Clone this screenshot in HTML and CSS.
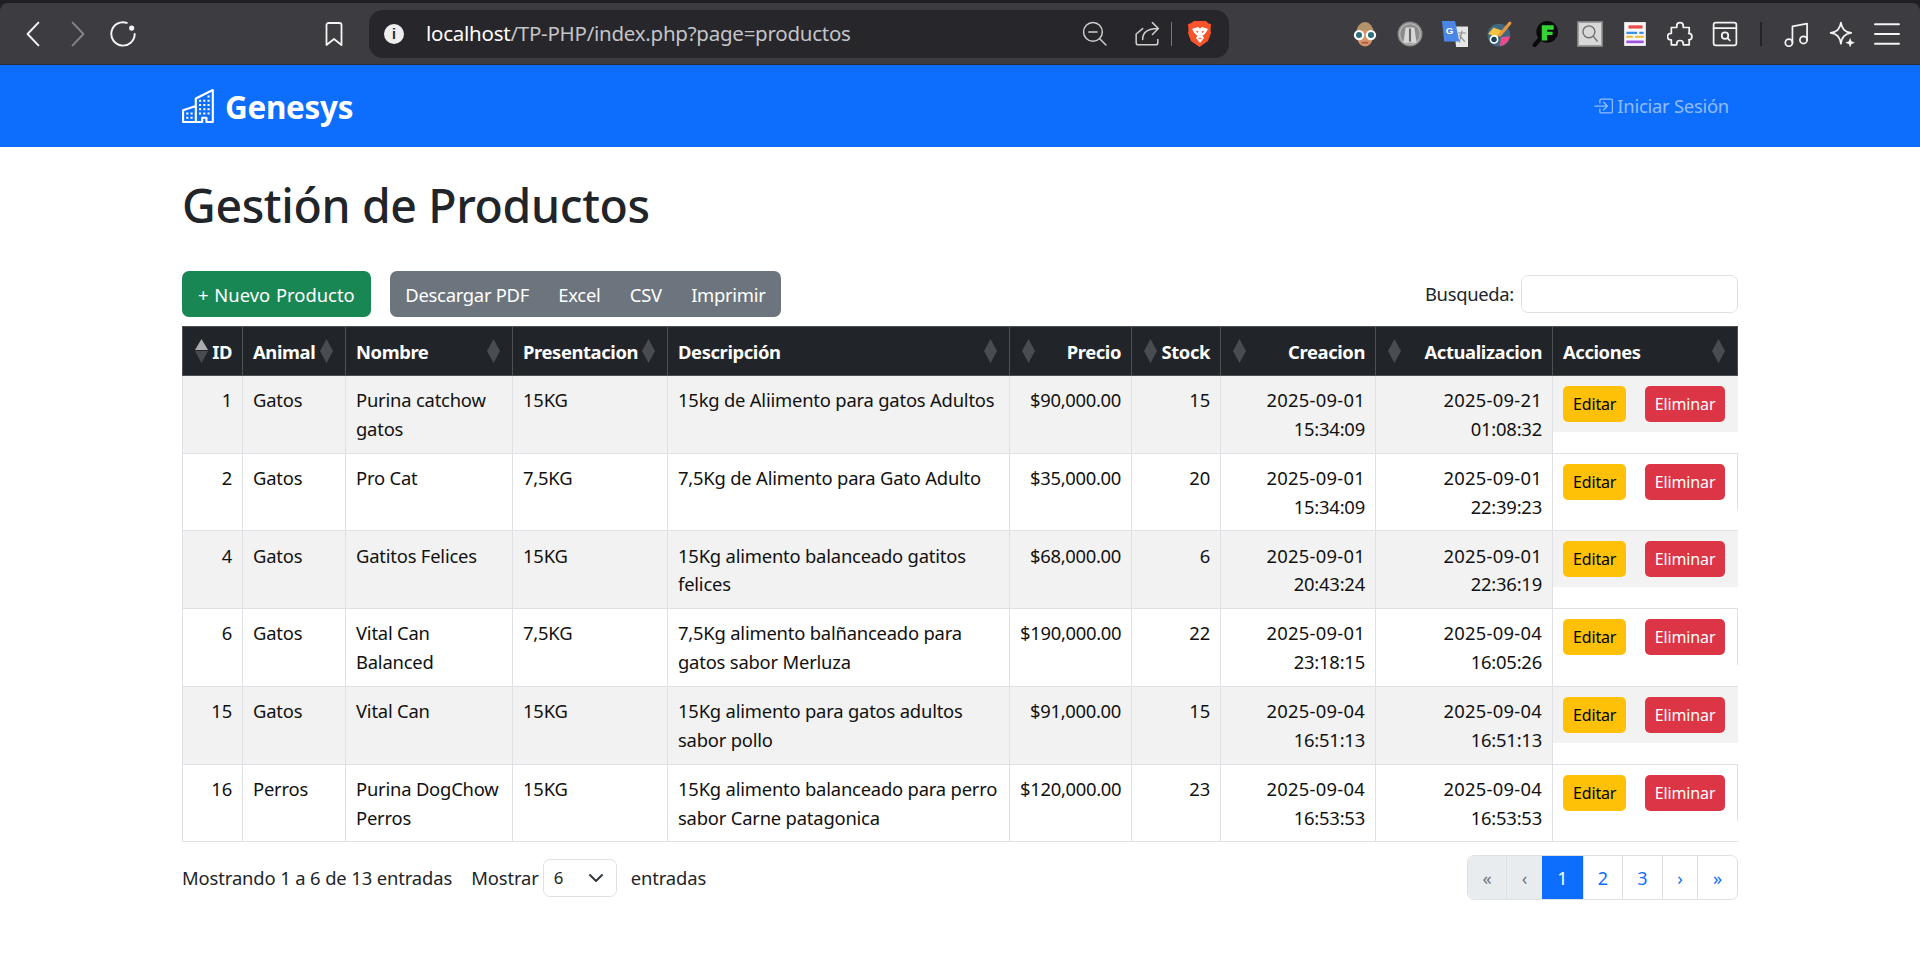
FILE: index.html
```html
<!DOCTYPE html>
<html lang="es">
<head>
<meta charset="utf-8">
<title>Genesys</title>
<link rel="stylesheet" href="styles.css">
</head>
<body>
<div class="chrome">
  <div class="toolbar">
    <div class="nav-icons">
      <svg class="ic" viewBox="0 0 24 24"><path d="M17 1.5 7 12l10 10.5"/></svg>
      <svg class="ic dim" viewBox="0 0 24 24"><path d="M7 1.5 17 12 7 22.5"/></svg>
      <svg class="ic" viewBox="0 0 24 24"><path d="M15.5 1.7A10.8 10.8 0 1 0 22.8 12"/><circle class="fill" cx="20" cy="6.5" r="2.4"/></svg>
    </div>
    <svg class="ic bookmark" viewBox="0 0 18 24"><path d="M1.5 3a2 2 0 0 1 2-2h11a2 2 0 0 1 2 2v20L9 17l-7.500 6z"/></svg>
    <div class="urlbar">
      <span class="info">i</span>
      <span class="url">localhost<span class="url-dim">/TP-PHP/index.php?page=productos</span></span>
      <svg class="ic url-ic zoom-ic" viewBox="0 0 24 24"><circle cx="10.500" cy="10.500" r="9"/><path d="M6.500 10.500h8M17 17l6 6"/></svg>
      <svg class="ic url-ic share-ic" viewBox="0 0 24 24"><path d="m2 12 6-5M2 12v8a2 2 0 0 0 2 2h16a2 2 0 0 0 2-2v-3M8 17c0-6 4-10 14-10M17 1.500l5.500 5.500-5.500 5.500"/></svg>
      <span class="url-sep"></span>
      <svg class="brave" viewBox="0 0 24 28"><path fill="#fb542b" d="M6 1h12l2.500 2.500 2.500.5-.5 6 .5 3-3 8-8.500 6-8.500-6-3-8 .5-3-.5-6 2.500-.5z"/><path fill="#fff" d="m4 9 6-2 2 1.500L14 7l6 2-3 5-2.500 1.500L16 18l-4 5-4-5 1.500-2.500L7 14z"/><path fill="#fb542b" d="M10 18h4l-2 1.500zM7.500 10.500l3 1-1 1.500zM16.500 10.500l-3 1 1 1.500z"/></svg>
    </div>
    <div class="exts">
      <svg class="ext" viewBox="0 0 24 24"><path fill="#b4936b" d="M4 11a8 10 0 0 1 16 0v3H4z"/><ellipse fill="#d9936a" cx="12" cy="16" rx="7" ry="7.500"/><path stroke="#a8583c" stroke-width="1.500" d="M9 20h6"/><circle fill="#2f6f7a" stroke="#fff" stroke-width="2" cx="6.500" cy="13" r="3.800"/><circle fill="#2f6f7a" stroke="#fff" stroke-width="2" cx="17.500" cy="13" r="3.800"/></svg>
      <svg class="ext" viewBox="0 0 24 24"><circle fill="#8c8c8c" cx="12" cy="12" r="11.500"/><circle fill="none" stroke="#bbb" cx="12" cy="12" r="9.500"/><path fill="#d8d8d8" d="M8 6h8l2 14H6z"/><path fill="#6a6a6a" d="M11 7h2v12h-2z"/></svg>
      <svg class="ext" viewBox="0 0 24 24"><path fill="#e6e6e6" d="M11 5h13v19H13z"/><path fill="#4a86e8" d="M0 0h12l4 19H2z"/><text x="3.500" y="12" class="ext-g">G</text><path fill="none" stroke="#8a8a8a" d="M15 11h7M18.500 9 16 20M16 13l5 6"/></svg>
      <svg class="ext" viewBox="0 0 24 24"><circle fill="#41687e" cx="11" cy="13" r="10.500"/><path fill="#f6c445" d="M1 12 6 6l8 3-4 6z"/><path fill="#ef4a8c" d="M12 23a10 10 0 0 0 9-9l-8 1z"/><circle fill="#1b4257" stroke="#fff" stroke-width="1.500" cx="6.500" cy="17" r="3.300"/><path stroke="#e8973c" stroke-width="3" stroke-linecap="round" d="M12 13 21 2"/></svg>
      <svg class="ext" viewBox="0 0 24 24"><circle fill="#0a0a0a" cx="14" cy="10" r="10"/><path stroke="#0a0a0a" stroke-width="4" stroke-linecap="round" d="M7 17 2.500 22"/><path fill="#35d435" d="M9 4h11v4h-6v2h5v3h-5v5H9z"/></svg>
      <svg class="ext" viewBox="0 0 24 24"><path fill="#d8d8d8" stroke="#9b9b9b" stroke-width="1.500" d="M1 1h22v22H1z"/><circle fill="none" stroke="#6f6f6f" stroke-width="1.300" cx="11" cy="10" r="5.500"/><path stroke="#6f6f6f" stroke-width="1.300" d="m15 14 4 5"/></svg>
      <svg class="ext" viewBox="0 0 24 24"><path fill="#f7f7f7" d="M2 1h20v22H2z"/><path fill="#ea4a4a" d="M6 4h13v3H6z"/><path fill="#3f8fe0" d="M4 10h10v2H4zM16 10h4v2h-4z"/><path fill="#f2b632" d="M4 13.500h6v2H4zM12 13.500h8v2h-8z"/><path fill="#a052e0" d="M4 18h16v2.500H4z"/></svg>
      <svg class="ic ext-line" viewBox="0 0 24 24"><path d="M9 4.500a3 3 0 0 1 6 0V6h5.500v5.500H20a3 3 0 0 1 0 6h.5V22H15v-1a3 3 0 0 0-6 0v1H4v-4.500h-.5a3 3 0 0 1 0-6H4V6h5z"/></svg>
      <svg class="ic ext-line" viewBox="0 0 24 24"><rect x="1.500" y="1.500" width="21" height="21" rx="2"/><path d="M1.500 6.500h21"/><circle cx="12" cy="13.500" r="3"/><path d="m14.500 16 2 2"/></svg>
      <span class="tb-sep"></span>
      <svg class="ic ext-line" viewBox="0 0 24 24"><circle cx="4.500" cy="20" r="3.300"/><circle cx="18" cy="17.500" r="3.300"/><path d="M7.800 20V5L21.300 2.500v15"/></svg>
      <svg class="ic ext-line" viewBox="0 0 24 24"><path d="M11 1.500c1 6 3.500 8.500 9.500 9.500-6 1-8.500 3.500-9.500 10-1-6.500-3.500-9-9.500-10 6-1 8.500-3.500 9.500-9.500z"/><path class="fill" d="m19.500 15.500 1.200 3.300 3.300 1.200-3.300 1.200-1.200 3.300-1.200-3.300-3.300-1.200 3.300-1.200z"/></svg>
      <svg class="ic ext-line burger" viewBox="0 0 24 24"><path d="M1 3h22M1 12h22M1 21h22"/></svg>
    </div>
  </div>
</div>

<nav class="navbar">
  <div class="container nav-inner">
    <a class="brand">
      <svg class="brand-ic" viewBox="0 0 16 16" fill="currentColor"><path d="M14.763.075A.5.5 0 0 1 15 .5v15a.5.5 0 0 1-.5.5h-3a.5.5 0 0 1-.5-.5V14h-1v1.5a.5.5 0 0 1-.5.5h-9a.5.5 0 0 1-.5-.5V10a.5.5 0 0 1 .342-.474L6 7.64V4.500a.5.5 0 0 1 .276-.447l8-4a.5.5 0 0 1 .487.022ZM6 8.694 1 10.360V15h5V8.694ZM7 15h2v-1.500a.5.5 0 0 1 .5-.5h2a.5.5 0 0 1 .5.5V15h2V1.309l-7 3.500V15Z"/><path d="M2 11h1v1H2v-1Zm2 0h1v1H4v-1Zm-2 2h1v1H2v-1Zm2 0h1v1H4v-1Zm4-4h1v1H8V9Zm2 0h1v1h-1V9Zm-2 2h1v1H8v-1Zm2 0h1v1h-1v-1Zm2-2h1v1h-1V9Zm0 2h1v1h-1v-1ZM8 7h1v1H8V7Zm2 0h1v1h-1V7Zm2 0h1v1h-1V7ZM8 5h1v1H8V5Zm2 0h1v1h-1V5Zm2 0h1v1h-1V5Zm0-2h1v1h-1V3Z"/></svg>
      <span class="brand-name">Genesys</span>
    </a>
    <a class="login">
      <svg class="login-ic" viewBox="0 0 16 16" fill="currentColor"><path fill-rule="evenodd" d="M6 3.500a.5.5 0 0 1 .5-.5h8a.5.5 0 0 1 .5.5v9a.5.5 0 0 1-.5.5h-8a.5.5 0 0 1-.5-.5v-2a.5.5 0 0 0-1 0v2A1.500 1.500 0 0 0 6.500 14h8a1.500 1.500 0 0 0 1.500-1.500v-9A1.500 1.500 0 0 0 14.500 2h-8A1.500 1.500 0 0 0 5 3.500v2a.5.5 0 0 0 1 0v-2z"/><path fill-rule="evenodd" d="M11.854 8.354a.5.5 0 0 0 0-.708l-3-3a.5.5 0 1 0-.708.708L10.293 7.500H1.500a.5.5 0 0 0 0 1h8.793l-2.147 2.146a.5.5 0 0 0 .708.708l3-3z"/></svg>
      Iniciar Sesión
    </a>
  </div>
</nav>

<main class="container">
  <h1 class="title">Gestión de Productos</h1>
  <div class="controls">
    <a class="btn btn-green">+ Nuevo Producto</a>
    <div class="btn-group">
      <a class="btn btn-gray">Descargar PDF</a>
      <a class="btn btn-gray">Excel</a>
      <a class="btn btn-gray">CSV</a>
      <a class="btn btn-gray">Imprimir</a>
    </div>
    <label class="search">Busqueda: <input class="search-input" type="text"></label>
  </div>

  <table class="tbl">
    <colgroup>
      <col class="c1"><col class="c2"><col class="c3"><col class="c4"><col class="c5"><col class="c6"><col class="c7"><col class="c8"><col class="c9"><col class="c10">
    </colgroup>
    <thead>
      <tr>
        <th class="r asc">ID</th><th class="l rsort">Animal</th><th class="l rsort">Nombre</th><th class="l rsort">Presentacion</th><th class="l rsort">Descripción</th>
        <th class="r">Precio</th><th class="r">Stock</th><th class="r">Creacion</th><th class="r">Actualizacion</th><th class="l rsort">Acciones</th>
      </tr>
    </thead>
    <tbody>
      <tr class="odd"><td class="r">1</td><td>Gatos</td><td>Purina catchow gatos</td><td>15KG</td><td>15kg de Aliimento para gatos Adultos</td><td class="r p">$90,000.00</td><td class="r">15</td><td class="r"><span class="d">2025-09-01</span> 15:34:09</td><td class="r"><span class="d">2025-09-21</span> 01:08:32</td><td class="act"><div class="act-in"><a class="sm edit">Editar</a><a class="sm del">Eliminar</a></div></td></tr>
      <tr><td class="r">2</td><td>Gatos</td><td>Pro Cat</td><td>7,5KG</td><td>7,5Kg de Alimento para Gato Adulto</td><td class="r p">$35,000.00</td><td class="r">20</td><td class="r"><span class="d">2025-09-01</span> 15:34:09</td><td class="r"><span class="d">2025-09-01</span> 22:39:23</td><td class="act"><div class="act-in"><a class="sm edit">Editar</a><a class="sm del">Eliminar</a></div></td></tr>
      <tr class="odd"><td class="r">4</td><td>Gatos</td><td>Gatitos Felices</td><td>15KG</td><td>15Kg alimento balanceado gatitos felices</td><td class="r p">$68,000.00</td><td class="r">6</td><td class="r"><span class="d">2025-09-01</span> 20:43:24</td><td class="r"><span class="d">2025-09-01</span> 22:36:19</td><td class="act"><div class="act-in"><a class="sm edit">Editar</a><a class="sm del">Eliminar</a></div></td></tr>
      <tr><td class="r">6</td><td>Gatos</td><td>Vital Can Balanced</td><td>7,5KG</td><td>7,5Kg alimento balñanceado para gatos sabor Merluza</td><td class="r p">$190,000.00</td><td class="r">22</td><td class="r"><span class="d">2025-09-01</span> 23:18:15</td><td class="r"><span class="d">2025-09-04</span> 16:05:26</td><td class="act"><div class="act-in"><a class="sm edit">Editar</a><a class="sm del">Eliminar</a></div></td></tr>
      <tr class="odd"><td class="r">15</td><td>Gatos</td><td>Vital Can</td><td>15KG</td><td>15Kg alimento para gatos adultos sabor pollo</td><td class="r p">$91,000.00</td><td class="r">15</td><td class="r"><span class="d">2025-09-04</span> 16:51:13</td><td class="r"><span class="d">2025-09-04</span> 16:51:13</td><td class="act"><div class="act-in"><a class="sm edit">Editar</a><a class="sm del">Eliminar</a></div></td></tr>
      <tr><td class="r">16</td><td>Perros</td><td>Purina DogChow Perros</td><td>15KG</td><td>15Kg alimento balanceado para perro sabor Carne patagonica</td><td class="r p">$120,000.00</td><td class="r">23</td><td class="r"><span class="d">2025-09-04</span> 16:53:53</td><td class="r"><span class="d">2025-09-04</span> 16:53:53</td><td class="act"><div class="act-in"><a class="sm edit">Editar</a><a class="sm del">Eliminar</a></div></td></tr>
    </tbody>
  </table>

  <div class="foot">
    <div class="foot-info">Mostrando 1 a 6 de 13 entradas</div>
    <div class="foot-len">
      <span>Mostrar</span>
      <span class="select">6<svg class="chev" viewBox="0 0 16 16"><path d="m2 5 6 6 6-6"/></svg></span>
      <span class="foot-after">entradas</span>
    </div>
    <div class="pager">
      <a class="pg off">«</a><a class="pg off">‹</a><a class="pg on">1</a><a class="pg">2</a><a class="pg">3</a><a class="pg">›</a><a class="pg">»</a>
    </div>
  </div>
</main>
</body>
</html>
```

FILE: styles.css
```css
* { box-sizing: border-box; }
html, body { margin: 0; padding: 0; }
body {
  width: 1920px;
  height: 955px;
  overflow: hidden;
  background: #fff;
  color: #212529;
  font-family: "Noto Sans", sans-serif;
  font-size: 18.4px;
  line-height: 28.8px;
  letter-spacing: -0.12px;
}

/* browser chrome */
.chrome { height: 65px; background: #202024; padding-top: 3px; }
.toolbar {
  height: 62px;
  background: #3c3c41;
  border-radius: 8px 8px 0 0;
  display: flex;
  align-items: center;
  border-bottom: 1px solid #2c2c30;
}
.ic { display: block; fill: none; stroke: #f4f4f4; stroke-width: 1.8; stroke-linecap: round; stroke-linejoin: round; }
.ic .fill { fill: #f4f4f4; stroke: none; }
.ic.dim { stroke: #85858a; }
.nav-icons { display: flex; gap: 19px; margin-left: 20px; }
.nav-icons .ic { width: 26px; height: 26px; }
.bookmark { width: 18px; height: 24px; margin-left: 189px; }
.urlbar {
  width: 860px;
  height: 48px;
  margin-left: 26px;
  background: #26262b;
  border-radius: 14px;
  display: flex;
  align-items: center;
  padding-left: 15px;
}
.info {
  width: 20px; height: 20px; border-radius: 50%;
  background: #eee; color: #26262b;
  font: 700 14px/20px "Liberation Sans", sans-serif;
  letter-spacing: 0;
  text-align: center;
}
.url { margin-left: 22px; width: 656px; color: #fff; font-size: 20.5px; letter-spacing: -0.25px; }
.url-dim { color: #c4c4c8; }
.url-ic { stroke: #cfcfcf; stroke-width: 1.4; }
.zoom-ic { width: 25px; height: 25px; margin-right: 27px; }
.share-ic { width: 26px; height: 26px; margin-right: 11px; }
.url-sep { width: 1px; height: 24px; background: #77777b; margin-right: 16px; }
.brave { width: 24px; height: 28px; }
.exts { display: flex; align-items: center; gap: 19px; margin-left: 123px; }
.ext { width: 26px; height: 26px; display: block; }
.ext-line { width: 26px; height: 26px; stroke-width: 1.6; }
.burger { stroke-width: 2; }
.ext-g { font: 700 9px "Liberation Sans", sans-serif; fill: #fff; letter-spacing: 0; }
.tb-sep { width: 2px; height: 24px; background: #252528; margin: 0 3px; }

/* navbar */
.container { width: 1556px; margin: 0 auto; }
.navbar { height: 82px; background: #0d6efd; display: flex; align-items: center; }
.nav-inner { display: flex; align-items: center; justify-content: space-between; }
.brand { display: flex; align-items: center; gap: 9px; color: #fff; font-size: 31.4px; font-weight: 700; letter-spacing: -0.25px; }
.brand-ic { width: 34px; height: 34px; }
.brand-name { padding-top: 3px; }
.login { display: flex; align-items: center; gap: 4px; margin-right: 9px; color: rgba(255,255,255,.55); letter-spacing: -0.25px; }
.login-ic { width: 20px; height: 20px; }

/* title and controls */
.title { margin: 29px 0 0; font-size: 46.4px; line-height: 58px; font-weight: 500; letter-spacing: -0.35px; }
.controls { display: flex; align-items: center; margin-top: 37px; height: 46px; }
.btn {
  display: block;
  height: 46px;
  line-height: 47px;
  color: #fff;
}
.btn-green { padding: 0 16px; background: #198754; border-radius: 7px; letter-spacing: 0; word-spacing: 1px; }
.btn-group { display: flex; padding: 0 1px; margin-left: 19px; background: #6c757d; border-radius: 7px; }
.btn-gray { padding: 0 14.7px; letter-spacing: -0.28px; }
.search { margin-left: auto; display: flex; align-items: center; gap: 7px; letter-spacing: -0.3px; }
.search-input { width: 217px; height: 38px; border: 1px solid #dee2e6; border-radius: 7px; background: #fff; }

/* table */
.tbl {
  margin-top: 9px;
  width: 1555px;
  table-layout: fixed;
  border-collapse: collapse;
}
.c1 { width: 60px; } .c2 { width: 103px; } .c3 { width: 167px; } .c4 { width: 155px; }
.c5 { width: 342px; } .c6 { width: 122px; } .c7 { width: 89px; } .c8 { width: 155px; }
.c9 { width: 177px; } .c10 { width: 185px; }
th, td { padding: 10.2px 10px 9px; border: 1px solid #dee2e6; vertical-align: top; text-align: left; letter-spacing: -0.2px; }
thead th {
  height: 48px;
  padding: 11px 10px 8px;
  background: #212529;
  color: #fff;
  border-color: #4d5154;
  font-weight: 700;
  letter-spacing: -0.4px;
  white-space: nowrap;
  vertical-align: middle;
  background-repeat: no-repeat;
  background-size: 13px 24px;
  background-position: 12px center;
  background-image: url("data:image/svg+xml,%3Csvg xmlns='http://www.w3.org/2000/svg' viewBox='0 0 13 24'%3E%3Cpath fill='%23494c51' d='M6.5 0 13 12H0zM6.5 24 13 12H0z'/%3E%3C/svg%3E");
}
thead th.rsort { background-position: right 12px center; }
thead th.asc { background-image: url("data:image/svg+xml,%3Csvg xmlns='http://www.w3.org/2000/svg' viewBox='0 0 13 24'%3E%3Cpath fill='%23a9abad' d='M6.5 0 13 11H0z'/%3E%3Cpath fill='%23494c51' d='M6.5 24 13 12H0z'/%3E%3C/svg%3E"); }
th.r, td.r { text-align: right; }
tr.odd td { background: #f2f2f2; }
td { color: #111; }
.d { letter-spacing: 0.25px; }
td.p { letter-spacing: -0.3px; }

/* action cell: its background stops short of the row bottom */
td.act, tr.odd td.act { padding: 0; background: transparent; border-right: 0; }
.act-in { height: 56px; padding: 10px 9px 0 10px; display: flex; gap: 18.5px; border-right: 1px solid #dee2e6; }
tr.odd .act-in { background: #f2f2f2; border-right-color: #f2f2f2; }
.sm {
  display: block;
  height: 36px;
  padding: 0 10px;
  border-radius: 5px;
  font-size: 16px;
  line-height: 36px;
  letter-spacing: -0.15px;
}
.edit { background: #ffc107; color: #000; }
.del { background: #dc3545; color: #fff; }

/* footer */
.foot { display: flex; align-items: center; margin-top: 13px; height: 45px; }
.foot-len { display: flex; align-items: center; margin-left: 19px; }
.select {
  display: flex; align-items: center; justify-content: space-between;
  width: 74px; height: 38px; margin-left: 4px;
  padding: 0 12px 0 10px;
  border: 1px solid #dee2e6; border-radius: 7px;
  font-size: 16.8px;
}
.chev { width: 16px; height: 16px; fill: none; stroke: #343a40; stroke-width: 2; stroke-linecap: round; stroke-linejoin: round; }
.foot-after { margin-left: 14px; }
.pager { margin-left: auto; display: flex; height: 45px; border: 1px solid #dee2e6; border-radius: 7px; overflow: hidden; }
.pg {
  display: flex; align-items: center; justify-content: center;
  height: 100%;
  border-left: 1px solid #dee2e6;
  color: #0d6efd;
  font-size: 18px;
  letter-spacing: 0;
}
.pg:nth-child(1) { width: 38px; border-left: 0; }
.pg:nth-child(2) { width: 36px; }
.pg:nth-child(3) { width: 41px; }
.pg:nth-child(4) { width: 39px; }
.pg:nth-child(5) { width: 40px; }
.pg:nth-child(6) { width: 35px; }
.pg:nth-child(7) { width: 40px; }
.pg.off { background: #e9ecef; color: #6c757d; }
.pg.on { background: #0d6efd; color: #fff; border-left: 0; }
```
